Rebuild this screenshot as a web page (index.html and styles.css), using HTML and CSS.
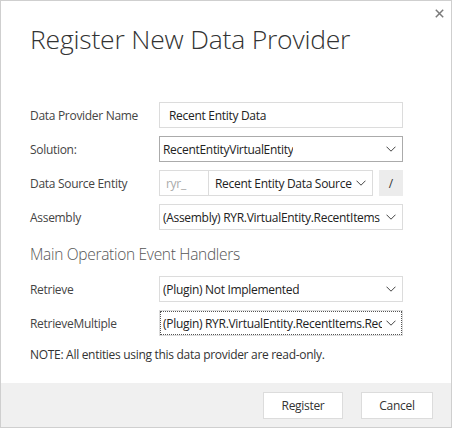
FILE: index.html
```html
<!DOCTYPE html>
<html>
<head>
<meta charset="utf-8">
<link rel="stylesheet" href="styles.css">
</head>
<body>
<div class="dialog">
  <button class="close" aria-label="Close">
    <svg width="9" height="9" viewBox="0 0 9 9"><path d="M0.8 0.8L8.2 8.2M8.2 0.8L0.8 8.2" stroke="#7a7a7a" stroke-width="1.5"/></svg>
  </button>
  <div class="content">
    <h1 class="title">Register New Data Provider</h1>
    <div class="form">
      <label class="label">Data Provider Name</label>
      <div class="field text">Recent Entity Data</div>

      <label class="label">Solution:</label>
      <div class="field select dark"><span>RecentEntityVirtualEntity</span><svg class="chev" width="10" height="6" viewBox="0 0 10 6"><path d="M0.5 0.7L5 5.2L9.5 0.7" fill="none" stroke="#444" stroke-width="1"/></svg></div>

      <label class="label">Data Source Entity</label>
      <div class="split">
        <div class="field prefix">ryr_</div>
        <div class="field select inner"><span>Recent Entity Data Source</span><svg class="chev" width="10" height="6" viewBox="0 0 10 6"><path d="M0.5 0.7L5 5.2L9.5 0.7" fill="none" stroke="#444" stroke-width="1"/></svg></div>
        <div class="slash">/</div>
      </div>

      <label class="label">Assembly</label>
      <div class="field select"><span>(Assembly) RYR.VirtualEntity.RecentItems</span><svg class="chev" width="10" height="6" viewBox="0 0 10 6"><path d="M0.5 0.7L5 5.2L9.5 0.7" fill="none" stroke="#444" stroke-width="1"/></svg></div>
    </div>

    <h2 class="section">Main Operation Event Handlers</h2>

    <div class="form form2">
      <label class="label">Retrieve</label>
      <div class="field select"><span>(Plugin) Not Implemented</span><svg class="chev" width="10" height="6" viewBox="0 0 10 6"><path d="M0.5 0.7L5 5.2L9.5 0.7" fill="none" stroke="#444" stroke-width="1"/></svg></div>

      <label class="label">RetrieveMultiple</label>
      <div class="field select focus"><span>(Plugin) RYR.VirtualEntity.RecentItems.Rec</span><svg class="chev" width="10" height="6" viewBox="0 0 10 6"><path d="M0.5 0.7L5 5.2L9.5 0.7" fill="none" stroke="#444" stroke-width="1"/></svg></div>
    </div>

    <p class="note">NOTE: All entities using this data provider are read-only.</p>
  </div>
  <div class="footer">
    <button class="btn">Register</button>
    <button class="btn">Cancel</button>
  </div>
</div>
</body>
</html>
```
FILE: styles.css
```css
html, body {
  margin: 0;
  padding: 0;
  background: #ffffff;
}
.dialog {
  position: relative;
  width: 452px;
  height: 428px;
  box-sizing: border-box;
  border: 1px solid #cfcfcf;
  background: #fff;
  display: flex;
  flex-direction: column;
  font-family: "Open Sans", "Noto Sans", sans-serif;
  color: #333;
}
.close {
  position: absolute;
  top: 8px;
  right: 7px;
  width: 9px;
  height: 9px;
  padding: 0;
  border: 0;
  background: none;
  display: flex;
  align-items: center;
  justify-content: center;
}
.content {
  flex: 1;
  padding: 0 47px 0 29px;
}
.title {
  margin: 20px 0 0 0;
  font-weight: 300;
  font-size: 26.5px;
  line-height: 36px;
  color: #333;
  letter-spacing: -0.2px;
}
.form {
  margin-top: 45px;
  display: grid;
  grid-template-columns: 129px 244px;
  row-gap: 8px;
  align-items: center;
}
.form2 {
  margin-top: 11px;
}
.label {
  font-size: 12px;
  letter-spacing: -0.3px;
  color: #444;
}
.field {
  box-sizing: border-box;
  height: 26px;
  border: 1px solid #dcdcdc;
  font-size: 12px;
  letter-spacing: -0.3px;
  color: #222;
  display: flex;
  align-items: center;
  padding: 0 8px;
  white-space: nowrap;
  overflow: hidden;
}
.text {
  padding-left: 9px;
}
.select {
  padding: 0 6px 0 3px;
  justify-content: space-between;
}
.select span {
  overflow: hidden;
}
.select.dark {
  border-color: #ababab;
}
.chev {
  flex: none;
  margin-left: 4px;
}
.split {
  display: flex;
  align-items: center;
}
.prefix {
  width: 50px;
  color: #aaa;
  padding-left: 6px;
  flex: none;
}
.inner {
  width: 164px;
  flex: none;
  border-left: 0;
  padding-left: 6px;
}
.slash {
  margin-left: 6px;
  width: 25px;
  height: 26px;
  background: #ececec;
  display: flex;
  align-items: center;
  justify-content: center;
  font-size: 12px;
  color: #333;
}
.focus {
  outline: 1px dotted #555;
  outline-offset: -2px;
}
.section {
  margin: 13px 0 0 0;
  font-weight: 300;
  font-size: 15.5px;
  letter-spacing: -0.3px;
  line-height: 22px;
  color: #555;
}
.note {
  margin: 10px 0 0 0;
  font-size: 12px;
  letter-spacing: -0.3px;
  color: #333;
}
.footer {
  height: 44px;
  background: #f0f0f0;
  display: flex;
  justify-content: flex-end;
  align-items: center;
  gap: 18px;
  padding-right: 18px;
}
.btn {
  width: 80px;
  height: 27px;
  background: #fff;
  border: 1px solid #dcdcdc;
  font-family: "Open Sans", "Noto Sans", sans-serif;
  font-size: 12px;
  letter-spacing: -0.3px;
  color: #333;
  padding: 0;
}
.btn + .btn {
  width: 72px;
}
```
